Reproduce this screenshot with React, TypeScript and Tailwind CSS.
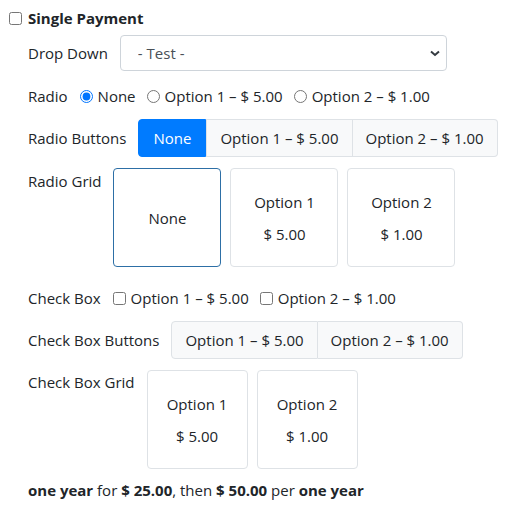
import React from "react";

const font = { fontFamily: '"Segoe UI", "Open Sans", "Liberation Sans", sans-serif' };

const GridBox: React.FC<{ title: string; price?: string; selected?: boolean; w: string }> = ({
  title,
  price,
  selected,
  w,
}) => (
  <div
    className={`${w} h-[99px] rounded-[4px] border flex flex-col items-center justify-center gap-[10px] ${
      selected ? "border-[#2d6fa6]" : "border-[#dee2e6]"
    }`}
  >
    <span>{title}</span>
    {price && <span>{price}</span>}
  </div>
);

export default function App() {
  return (
    <div className="bg-white text-[#212529] text-[15px] leading-[22px] pl-[9px] pt-[7px] w-[530px] h-[510px]" style={font}>
      {/* header */}
      <label className="flex items-center gap-[6px] font-bold">
        <input type="checkbox" className="w-[13px] h-[13px] m-0" />
        Single Payment
      </label>

      <div className="ml-[19px]">
        {/* Drop Down */}
        <div className="flex items-center gap-3 mt-[6px]">
          <span>Drop Down</span>
          <div className="relative">
            <select className="appearance-none w-[327px] h-[36px] border border-[#ced4da] rounded-[4px] pl-[17px] bg-white text-[#495057]">
              <option>- Test -</option>
            </select>
            <svg
              className="absolute right-[7px] top-[15px] pointer-events-none"
              width="10"
              height="7"
              viewBox="0 0 10 7"
            >
              <path d="M1 1.5 L5 5 L9 1.5" stroke="#343a40" strokeWidth="2" fill="none" />
            </svg>
          </div>
        </div>

        {/* Radio */}
        <div className="flex items-center gap-3 mt-[14px]">
          <span>Radio</span>
          <div className="flex items-center gap-[11px]">
            <label className="flex items-center gap-[5px]">
              <input type="radio" name="r" defaultChecked className="w-[13px] h-[13px] m-0" />
              None
            </label>
            <label className="flex items-center gap-[5px]">
              <input type="radio" name="r" className="w-[13px] h-[13px] m-0" />
              Option 1 – $ 5.00
            </label>
            <label className="flex items-center gap-[5px]">
              <input type="radio" name="r" className="w-[13px] h-[13px] m-0" />
              Option 2 – $ 1.00
            </label>
          </div>
        </div>

        {/* Radio Buttons */}
        <div className="flex items-center gap-3 mt-[12px]">
          <span>Radio Buttons</span>
          <div className="flex h-[38px]">
            <div className="px-[14px] flex items-center bg-[#007bff] text-white border border-[#007bff] rounded-l-[4px]">
              None
            </div>
            <div className="px-[13px] flex items-center bg-[#f8f9fa] border border-[#dee2e6]">Option 1 – $ 5.00</div>
            <div className="px-[13px] flex items-center bg-[#f8f9fa] border border-l-0 border-[#dee2e6] rounded-r-[4px]">
              Option 2 – $ 1.00
            </div>
          </div>
        </div>

        {/* Radio Grid */}
        <div className="flex items-start gap-3 mt-[11px]">
          <span className="mt-[2px]">Radio Grid</span>
          <div className="flex gap-[9px]">
            <GridBox w="w-[108px]" title="None" selected />
            <GridBox w="w-[108px]" title="Option 1" price="$ 5.00" />
            <GridBox w="w-[108px]" title="Option 2" price="$ 1.00" />
          </div>
        </div>

        {/* Check Box */}
        <div className="flex items-center gap-3 mt-[20px]">
          <span>Check Box</span>
          <div className="flex items-center gap-[11px]">
            <label className="flex items-center gap-[5px]">
              <input type="checkbox" className="w-[13px] h-[13px] m-0" />
              Option 1 – $ 5.00
            </label>
            <label className="flex items-center gap-[5px]">
              <input type="checkbox" className="w-[13px] h-[13px] m-0" />
              Option 2 – $ 1.00
            </label>
          </div>
        </div>

        {/* Check Box Buttons */}
        <div className="flex items-center gap-3 mt-[12px]">
          <span>Check Box Buttons</span>
          <div className="flex h-[38px]">
            <div className="px-[13px] flex items-center bg-[#f8f9fa] border border-[#dee2e6] rounded-l-[4px]">
              Option 1 – $ 5.00
            </div>
            <div className="px-[13px] flex items-center bg-[#f8f9fa] border border-l-0 border-[#dee2e6] rounded-r-[4px]">
              Option 2 – $ 1.00
            </div>
          </div>
        </div>

        {/* Check Box Grid */}
        <div className="flex items-start gap-3 mt-[11px]">
          <span className="mt-[1px]">Check Box Grid</span>
          <div className="flex gap-[9px]">
            <GridBox w="w-[101px]" title="Option 1" price="$ 5.00" />
            <GridBox w="w-[101px]" title="Option 2" price="$ 1.00" />
          </div>
        </div>

        {/* Summary */}
        <p className="mt-[10px]">
          <b>one year</b> for <b>$ 25.00</b>, then <b>$ 50.00</b> per <b>one year</b>
        </p>
      </div>
    </div>
  );
}
